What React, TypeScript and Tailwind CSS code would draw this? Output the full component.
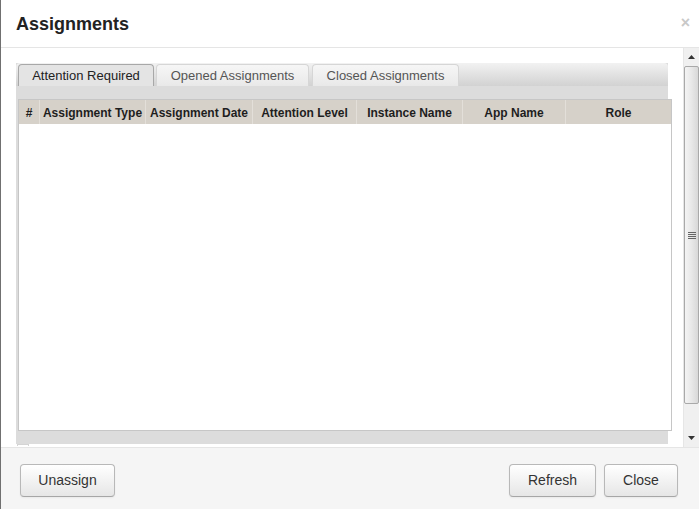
import React from "react";

const cols: { label: string; w: number }[] = [
  { label: "#", w: 21 },
  { label: "Assignment Type", w: 106 },
  { label: "Assignment Date", w: 107 },
  { label: "Attention Level", w: 104 },
  { label: "Instance Name", w: 106 },
  { label: "App Name", w: 103 },
  { label: "Role", w: 105 },
];

function Btn({ children, w }: { children: React.ReactNode; w: string }) {
  return (
    <button
      className={`${w} h-[33px] rounded-[4px] border border-[#b8b8b8] border-b-[#a6a6a6] bg-gradient-to-b from-[#ffffff] to-[#e6e6e6] text-[14px] text-[#333] shadow-[inset_0_1px_0_rgba(255,255,255,0.4),0_1px_2px_rgba(0,0,0,0.05)]`}
    >
      {children}
    </button>
  );
}

export default function App() {
  return (
    <div className="flex h-[509px] w-[699px] overflow-hidden bg-white font-['Liberation_Sans',Arial,sans-serif]">
      <div className="w-[1px] shrink-0 bg-[#707070]" />
      <div className="flex flex-1 flex-col">
        {/* header */}
        <div className="relative flex h-[48px] shrink-0 items-center border-b border-[#e5e5e5] pl-[15px]">
          <h3 className="text-[18px] font-bold leading-none text-[#222]">Assignments</h3>
          <span className="absolute right-[9px] top-[15px] text-[16px] font-bold leading-none text-[#c8c8c8]">×</span>
        </div>

        {/* body */}
        <div className="flex h-[399px] shrink-0">
          <div className="flex-1 pl-[15px] pt-[15px]">
            <div className="flex h-[381px] w-[652px] flex-col bg-[#dcdcdc]">
              {/* tab bar */}
              <div className="flex h-[23px] shrink-0 items-end rounded-t-[4px] bg-gradient-to-b from-[#f2f2f2] to-[#d2d2d2] pl-[2px]">
                <div className="flex h-[22px] w-[136px] items-center justify-center rounded-t-[4px] border border-b-0 border-[#a8a8a8] bg-[#e4e4e4] text-[13px] text-[#222]">
                  Attention Required
                </div>
                <div className="ml-[2px] flex h-[22px] w-[153px] items-center justify-center rounded-t-[4px] border border-b-0 border-[#d6d6d6] bg-gradient-to-b from-[#f6f6f6] to-[#e9e9e9] text-[13px] text-[#555]">
                  Opened Assignments
                </div>
                <div className="ml-[3px] flex h-[22px] w-[147px] items-center justify-center rounded-t-[4px] border border-b-0 border-[#d6d6d6] bg-gradient-to-b from-[#f6f6f6] to-[#e9e9e9] text-[13px] text-[#555]">
                  Closed Assignments
                </div>
              </div>
              {/* panel */}
              <div className="pl-[2px] pt-[13px]">
                <div className="flex h-[332px] w-[654px] flex-col border border-[#c6c6c6] bg-white">
                  <div className="flex h-[24px] shrink-0 bg-[#d6d1c9]">
                    {cols.map((c, i) => (
                      <div
                        key={c.label}
                        style={{ width: c.w }}
                        className={`flex items-center justify-center pt-[1px] text-[12px] font-bold text-[#1e1e1e] ${i < cols.length - 1 ? "border-r border-[#e3dfd9]" : ""}`}
                      >
                        {c.label}
                      </div>
                    ))}
                  </div>
                  <div className="flex-1" />
                </div>
              </div>
            </div>
            <div className="ml-[1px] h-[2px] w-[12px] border-x border-t border-[#d4d4d4] bg-white" />
          </div>

          {/* scrollbar */}
          <div className="flex w-[16px] shrink-0 flex-col border-l border-[#e6e6e6] bg-[#f0f0f0]">
            <div className="flex h-[18px] items-center justify-center">
              <svg width="7" height="4" viewBox="0 0 7 4">
                <polygon points="3.5,0 7,4 0,4" fill="#333" />
              </svg>
            </div>
            <div className="flex h-[338px] items-center justify-center rounded-[2px] border border-[#a9a9a9] bg-gradient-to-r from-[#f4f4f4] via-[#e8e8e8] to-[#d8d8d8]">
              <svg width="8" height="7" viewBox="0 0 8 7">
                <rect x="0" y="0" width="8" height="1" fill="#666" />
                <rect x="0" y="2" width="8" height="1" fill="#666" />
                <rect x="0" y="4" width="8" height="1" fill="#666" />
                <rect x="0" y="6" width="8" height="1" fill="#666" />
              </svg>
            </div>
            <div className="flex flex-1 items-end justify-center pb-[7px]">
              <svg width="7" height="4" viewBox="0 0 7 4">
                <polygon points="0,0 7,0 3.5,4" fill="#333" />
              </svg>
            </div>
          </div>
        </div>

        {/* footer */}
        <div className="flex flex-1 items-start justify-between border-t border-[#e5e5e5] bg-[#f5f5f5] pl-[19px] pr-[21px] pt-[16px]">
          <Btn w="w-[95px]">Unassign</Btn>
          <div className="flex gap-[8px]">
            <Btn w="w-[87px]">Refresh</Btn>
            <Btn w="w-[74px]">Close</Btn>
          </div>
        </div>
      </div>
    </div>
  );
}
